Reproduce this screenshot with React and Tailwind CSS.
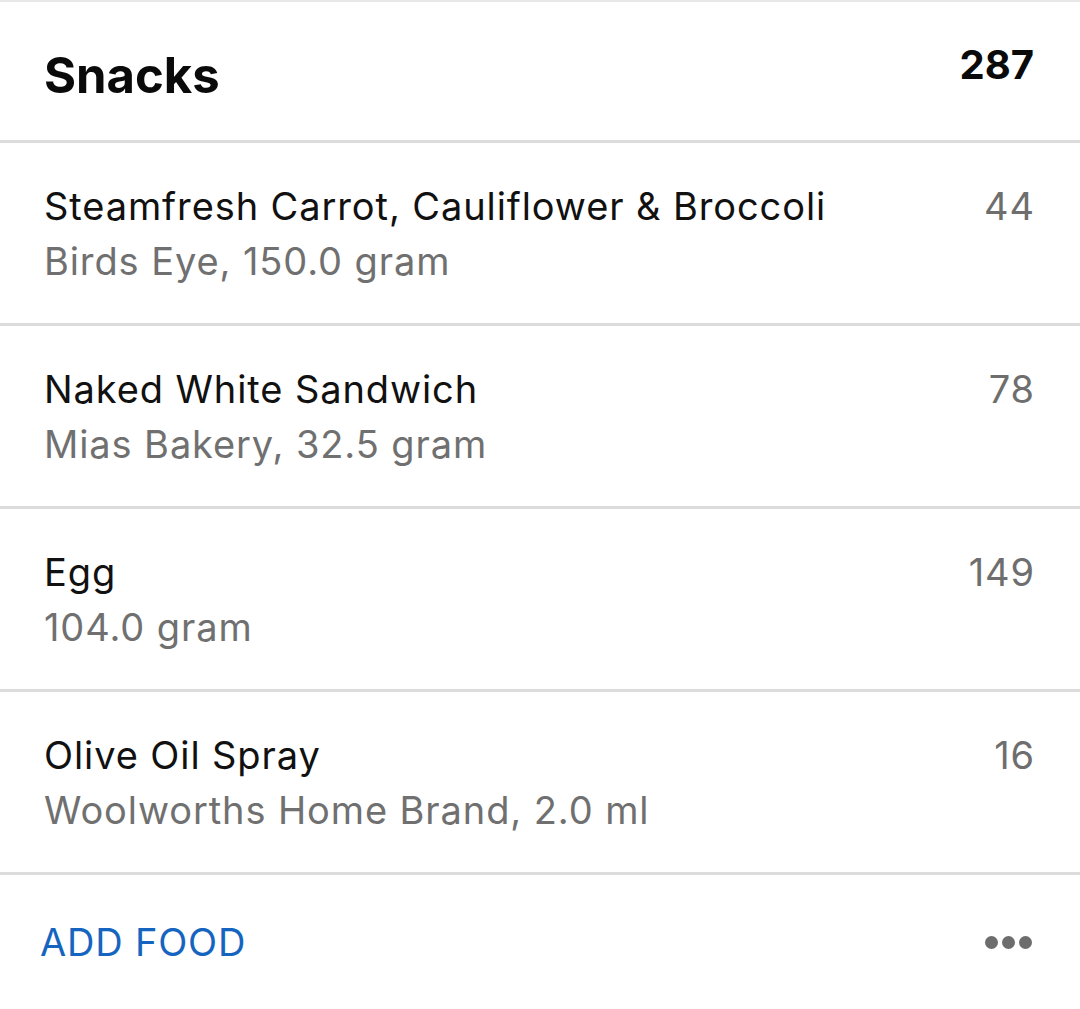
const foods = [
  { name: "Steamfresh Carrot, Cauliflower & Broccoli", detail: "Birds Eye, 150.0 gram", kcal: 44 },
  { name: "Naked White Sandwich", detail: "Mias Bakery, 32.5 gram", kcal: 78 },
  { name: "Egg", detail: "104.0 gram", kcal: 149 },
  { name: "Olive Oil Spray", detail: "Woolworths Home Brand, 2.0 ml", kcal: 16 },
];

function FoodRow({ food }) {
  return (
    <div className="flex justify-between items-start border-b-[3px] border-[#dcdcdc] pl-[44px] pr-[46px] pt-[36px] pb-[34px] tracking-[0.9px]">
      <div className="flex flex-col">
        <span className="text-[38px] leading-[55px] text-[#111111]">{food.name}</span>
        <span className="text-[38px] leading-[55px] text-[#707070]">{food.detail}</span>
      </div>
      <span className="text-[38px] leading-[55px] text-[#6e6e6e] -mr-[1px]">{food.kcal}</span>
    </div>
  );
}

export default function App() {
  return (
    <div
      className="w-[1080px] h-[1009px] bg-white overflow-hidden border-t-2 border-[#e8e8e8]"
      style={{ fontFamily: "Inter, 'Noto Sans', sans-serif" }}
    >
      {/* Meal header */}
      <div className="flex justify-between items-start h-[141px] border-b-[3px] border-[#dcdcdc] pl-[44px] pr-[46px]">
        <h2 className="mt-[44px] text-[49px] leading-[60px] font-bold text-[#0a0a0a]">Snacks</h2>
        <span className="mt-[39px] text-[40px] leading-[48px] font-bold text-[#0a0a0a]">287</span>
      </div>

      {foods.map((food) => (
        <FoodRow key={food.name} food={food} />
      ))}

      {/* Footer */}
      <div className="flex justify-between items-center pl-[40px] pr-[48px] pt-[40px]">
        <button className="text-[38px] leading-[55px] text-[#1565c0] tracking-[0.8px]">ADD FOOD</button>
        <div className="flex gap-[4px]">
          <span className="w-[13px] h-[13px] rounded-full bg-[#6d6d6d]" />
          <span className="w-[13px] h-[13px] rounded-full bg-[#6d6d6d]" />
          <span className="w-[13px] h-[13px] rounded-full bg-[#6d6d6d]" />
        </div>
      </div>
    </div>
  );
}
